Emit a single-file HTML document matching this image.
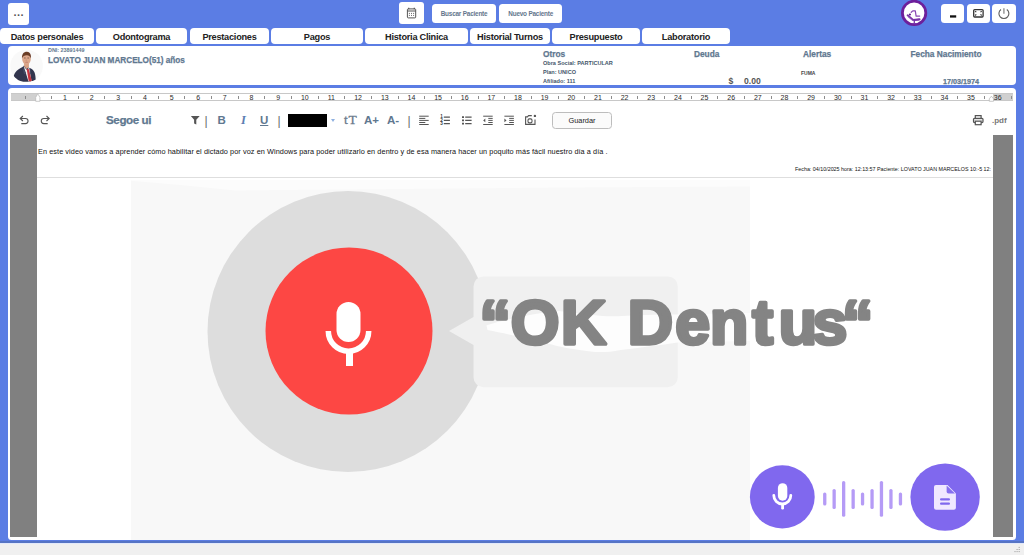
<!DOCTYPE html>
<html lang="es">
<head>
<meta charset="utf-8">
<title>Dentus - Historia Clinica</title>
<style>
*{box-sizing:border-box;margin:0;padding:0}
html,body{width:1024px;height:555px;overflow:hidden}
body{background:#5b7de4;font-family:"Liberation Sans",sans-serif;position:relative;color:#222}
.abs{position:absolute}
.btn{position:absolute;background:#fff;border-radius:3px}
.tab{position:absolute;top:28px;height:16.4px;background:#fff;border-radius:4px;font-weight:bold;font-size:9.2px;line-height:19.400px;overflow:hidden;text-align:center;color:#222;white-space:nowrap;letter-spacing:-0.25px}
.panel{position:absolute;background:#fff;border-radius:4px}
.t{position:absolute;white-space:nowrap;line-height:1}
.slate{color:#5f7890}
.hv{-webkit-text-stroke:0.250px currentColor}
.tk{position:absolute;top:2px;width:1px;height:3px;background:#8c8c8c}
.rn{position:absolute;top:0;width:20px;text-align:center;line-height:7px;white-space:nowrap}
</style>
</head>
<body>
<!-- top bar -->
<div class="btn" style="left:8px;top:3px;width:21px;height:22px"><span class="t" style="left:5.500px;top:4.200px;font-size:11px;font-weight:bold;color:#555;letter-spacing:0.500px">...</span></div>
<div class="btn" id="calbtn" style="left:399px;top:2px;width:25px;height:22px"></div>
<svg class="abs" style="left:399px;top:2px" width="25" height="22" viewBox="399 2 25 22" fill="none" stroke="#555" stroke-width="1">
<rect x="407.400" y="8.900" width="8.300" height="9" rx="0.800"/>
<path d="M407.400 11 H415.700" />
<path d="M408.700 7.700 V9.200 M414.300 7.700 V9.200" stroke-width="1.200"/>
<g fill="#666" stroke="none"><rect x="408.900" y="12.900" width="1" height="1"/><rect x="411" y="12.900" width="1" height="1"/><rect x="413.100" y="12.900" width="1" height="1"/><rect x="408.900" y="14.900" width="1" height="1"/><rect x="411" y="14.900" width="1" height="1"/><rect x="413.100" y="14.900" width="1" height="1"/></g>
</svg>
<div class="btn" style="left:432.400px;top:3.800px;width:63.300px;height:18.800px;border-radius:3.500px"><span class="t" style="left:0;width:63.300px;text-align:center;top:7.200px;font-size:6.400px;font-weight:bold;letter-spacing:-0.200px;color:#64768c">Buscar Paciente</span></div>
<div class="btn" style="left:499.100px;top:3.800px;width:63.200px;height:18.800px;border-radius:3.500px"><span class="t" style="left:0;width:63.200px;text-align:center;top:7.200px;font-size:6.400px;font-weight:bold;letter-spacing:-0.200px;color:#64768c">Nuevo Paciente</span></div>
<svg class="abs" id="logo" style="left:899px;top:0" width="30" height="28" viewBox="899 0 30 28">
<circle cx="914.100" cy="12.900" r="11.700" fill="#fff" stroke="#6c1f9b" stroke-width="2.800"/>
<g fill="none" stroke="#7a35a8" stroke-linecap="round" stroke-linejoin="round">
<path d="M907.600 15.300 L913.200 19.900 L919.600 19.300" stroke-width="1.900"/>
<path d="M913.200 19.300 L919.300 18.800 V20.400 L913.600 20.900 Z" fill="#7a35a8" stroke="none"/>
<path d="M908.300 16.900 L912.600 20.600" stroke-width="1" stroke="#9a62c0"/>
<path d="M914.300 20.300 V23.400 M912.300 23.600 H916.600" stroke-width="1.300"/>
<path d="M911.200 12.300 L912.800 10.900 H915.300 L916.100 16.100 H919.700" stroke-width="1.200" stroke="#8848b3"/>
</g>
<circle cx="909.900" cy="14.500" r="1.100" fill="#5a1a86"/>
</svg>
<div class="btn" style="left:940.700px;top:4px;width:23.700px;height:19px;border-radius:3.500px"></div>
<div class="btn" style="left:966.500px;top:4px;width:23.600px;height:19px;border-radius:3.500px"></div>
<div class="btn" style="left:992px;top:4px;width:24px;height:19px;border-radius:3.500px"></div>
<svg class="abs" style="left:940px;top:3px" width="77" height="21" viewBox="940 3 77 21" fill="none">
<rect x="950" y="15.300" width="6.200" height="2.300" fill="#111"/>
<rect x="973.700" y="9.600" width="9.400" height="7.400" rx="1" stroke="#333" stroke-width="1.300"/>
<path d="M975.100 11.100 l1.200 1.100 M981.700 11.100 l-1.200 1.100 M975.100 15.500 l1.200 -1.100 M981.700 15.500 l-1.200 -1.100" stroke="#333" stroke-width="1.100"/>
<path d="M1001 9.500 A5 5 0 1 0 1006.800 9.500" stroke="#5c5c5c" stroke-width="1.100"/>
<path d="M1003.900 8.200 V13.700" stroke="#999" stroke-width="1.500"/>
</svg>

<!-- tabs -->
<div class="tab" style="left:0;width:94px">Datos personales</div>
<div class="tab" style="left:96px;width:91px">Odontograma</div>
<div class="tab" style="left:190px;width:79px">Prestaciones</div>
<div class="tab" style="left:271px;width:92px">Pagos</div>
<div class="tab" style="left:365px;width:103px">Historia Clinica</div>
<div class="tab" style="left:470px;width:80px">Historial Turnos</div>
<div class="tab" style="left:552px;width:88px">Presupuesto</div>
<div class="tab" style="left:642px;width:88px">Laboratorio</div>

<!-- patient panel -->
<div class="panel" id="patient" style="left:8px;top:46px;width:1008px;height:39px">
</div>
<svg class="abs" id="avatar" style="left:9px;top:48px" width="36" height="36" viewBox="9 48 36 36">
<defs><clipPath id="avc"><circle cx="26.600" cy="66" r="16.300"/></clipPath><filter id="avb" x="-10%" y="-10%" width="120%" height="120%"><feGaussianBlur stdDeviation="0.350"/></filter></defs>
<circle cx="26.600" cy="66" r="16.300" fill="#f9f9f9"/>
<g clip-path="url(#avc)" filter="url(#avb)">
<path d="M13.300 80 C13.500 73 16 70.500 22.500 67 L24 65.500 L29.500 68 C33.500 69.500 35.500 71.500 35.700 80 C32 82.200 20 82.500 13.300 80 Z" fill="#30364e"/>
<path d="M23.500 65.800 L26.500 69.800 L29.200 67.800 L31.500 81 L28.500 81.500 Z" fill="#f2efef"/>
<path d="M26.700 69 L28.600 68.800 L31.800 80.500 L30.200 81.800 L28.600 80.500 Z" fill="#c8323d"/>
<path d="M24.200 62 L24 66 L26.500 69 L29 67 L28.800 62 Z" fill="#d9a285"/>
<ellipse cx="26.500" cy="59" rx="4.300" ry="5.700" fill="#dca78b"/>
<path d="M24 58 h1.700 M27.400 58 h1.700" stroke="#6b4a3c" stroke-width="0.700" fill="none"/>
<path d="M25.300 62.300 h2.600" stroke="#b56e62" stroke-width="0.600" fill="none"/>
<path d="M26.300 58.500 L26 61 h1" stroke="#c08a70" stroke-width="0.500" fill="none"/>
<path d="M22.700 67.200 L26 73 L24 74.500 Z M30 68.200 L29.500 73.500 L31.300 74 Z" fill="#444a63"/>
<path d="M22 58.500 C21.600 53.500 24.500 51.600 27 51.800 C30 52 31.500 54.500 30.800 58.500 C30 55.800 28.500 55 26.500 55.200 C24.500 55.200 22.800 56 22 58.500 Z" fill="#6a3d28"/>
</g>
</svg>
<span class="t slate" style="left:48px;top:47.900px;font-size:5.4px;font-weight:bold">DNI: 23891449</span>
<span class="t slate hv" style="left:48px;top:57.100px;font-size:8.2px;font-weight:bold">LOVATO JUAN MARCELO(51) años</span>
<span class="t slate hv" style="left:543px;top:49.800px;font-size:8.300px;font-weight:bold">Otros</span>
<span class="t" style="left:543px;top:61px;font-size:5.550px;font-weight:bold;color:#44556a">Obra Social: PARTICULAR</span>
<span class="t" style="left:543px;top:69.500px;font-size:5.550px;font-weight:bold;color:#44556a">Plan: UNICO</span>
<span class="t" style="left:543px;top:78.500px;font-size:5.550px;font-weight:bold;color:#44556a">Afiliado: 111</span>
<span class="t slate hv" style="left:694px;top:50.300px;font-size:8.300px;font-weight:bold">Deuda</span>
<span class="t" style="left:728.500px;top:77px;font-size:8.6px;font-weight:bold;color:#555">$</span>
<span class="t" style="left:744px;top:77px;font-size:8.6px;font-weight:bold;color:#555">0.00</span>
<span class="t slate hv" style="left:803px;top:49.800px;font-size:8.300px;font-weight:bold">Alertas</span>
<span class="t" style="left:801px;top:71px;font-size:5px;font-weight:bold;color:#444">FUMA</span>
<span class="t slate hv" style="left:910.500px;top:49.800px;font-size:8.300px;font-weight:bold">Fecha Nacimiento</span>
<span class="t slate hv" style="left:943px;top:77.500px;font-size:7.2px;font-weight:bold">17/03/1974</span>

<!-- editor panel -->
<div class="panel" id="editor" style="left:8px;top:88px;width:1008px;height:452.200px;border-radius:4px 4px 3.500px 3.500px"></div>

<div class="abs" id="ruler" style="left:11px;top:93px;width:1002px;height:8px;background:#fff;border-top:1px solid #c8c8c8;border-bottom:1px solid #c8c8c8;overflow:hidden;font-size:7px;color:#2a2a2a">
<div class="abs" style="left:0;top:0;width:25.5px;height:7px;background:#d0d0d0"></div>
<div class="abs" style="left:981.5px;top:0;width:20.5px;height:7px;background:#d0d0d0"></div>
<i class="tk" style="left:13.5px"></i>
<i class="tk" style="left:40.1px"></i>
<i class="tk" style="left:66.8px"></i>
<i class="tk" style="left:93.4px"></i>
<i class="tk" style="left:120.1px"></i>
<i class="tk" style="left:146.7px"></i>
<i class="tk" style="left:173.4px"></i>
<i class="tk" style="left:200.0px"></i>
<i class="tk" style="left:226.7px"></i>
<i class="tk" style="left:253.3px"></i>
<i class="tk" style="left:280.0px"></i>
<i class="tk" style="left:306.6px"></i>
<i class="tk" style="left:333.3px"></i>
<i class="tk" style="left:359.9px"></i>
<i class="tk" style="left:386.6px"></i>
<i class="tk" style="left:413.2px"></i>
<i class="tk" style="left:439.9px"></i>
<i class="tk" style="left:466.5px"></i>
<i class="tk" style="left:493.2px"></i>
<i class="tk" style="left:519.8px"></i>
<i class="tk" style="left:546.5px"></i>
<i class="tk" style="left:573.1px"></i>
<i class="tk" style="left:599.8px"></i>
<i class="tk" style="left:626.4px"></i>
<i class="tk" style="left:653.1px"></i>
<i class="tk" style="left:679.7px"></i>
<i class="tk" style="left:706.4px"></i>
<i class="tk" style="left:733.0px"></i>
<i class="tk" style="left:759.7px"></i>
<i class="tk" style="left:786.3px"></i>
<i class="tk" style="left:813.0px"></i>
<i class="tk" style="left:839.6px"></i>
<i class="tk" style="left:866.3px"></i>
<i class="tk" style="left:892.9px"></i>
<i class="tk" style="left:919.6px"></i>
<i class="tk" style="left:946.2px"></i>
<i class="tk" style="left:972.9px"></i>
<i class="tk" style="left:999.5px"></i>
<span class="rn" style="left:43.9px">1</span>
<span class="rn" style="left:70.6px">2</span>
<span class="rn" style="left:97.2px">3</span>
<span class="rn" style="left:123.9px">4</span>
<span class="rn" style="left:150.6px">5</span>
<span class="rn" style="left:177.2px">6</span>
<span class="rn" style="left:203.8px">7</span>
<span class="rn" style="left:230.5px">8</span>
<span class="rn" style="left:257.1px">9</span>
<span class="rn" style="left:283.8px">10</span>
<span class="rn" style="left:310.4px">11</span>
<span class="rn" style="left:337.1px">12</span>
<span class="rn" style="left:363.8px">13</span>
<span class="rn" style="left:390.4px">14</span>
<span class="rn" style="left:417.1px">15</span>
<span class="rn" style="left:443.7px">16</span>
<span class="rn" style="left:470.3px">17</span>
<span class="rn" style="left:497.0px">18</span>
<span class="rn" style="left:523.6px">19</span>
<span class="rn" style="left:550.3px">20</span>
<span class="rn" style="left:576.9px">21</span>
<span class="rn" style="left:603.6px">22</span>
<span class="rn" style="left:630.2px">23</span>
<span class="rn" style="left:656.9px">24</span>
<span class="rn" style="left:683.5px">25</span>
<span class="rn" style="left:710.2px">26</span>
<span class="rn" style="left:736.8px">27</span>
<span class="rn" style="left:763.5px">28</span>
<span class="rn" style="left:790.1px">29</span>
<span class="rn" style="left:816.8px">30</span>
<span class="rn" style="left:843.4px">31</span>
<span class="rn" style="left:870.1px">32</span>
<span class="rn" style="left:896.7px">33</span>
<span class="rn" style="left:923.4px">34</span>
<span class="rn" style="left:950.0px">35</span>
<span class="rn" style="left:976.7px">36</span>
</div>
<svg class="abs" style="left:30px;top:90px" width="970" height="14" viewBox="30 90 970 14" fill="#fff" stroke="#b4b4b4" stroke-width="0.700">
<path d="M35.700 101.300 V97.300 L37.800 93.800 L39.900 97.300 V101.300 Z"/>
<path d="M989.300 101.300 V98.800 L991.400 96.200 L993.500 98.800 V101.300 Z"/>
</svg>
<!-- toolbar -->
<div id="toolbar">
<span class="t slate hv" style="left:106px;top:113.700px;font-size:11.6px;font-weight:bold;letter-spacing:-0.4px">Segoe ui</span>
<span class="t" style="left:204.5px;top:115px;font-size:12px;color:#6a6a6a">|</span>
<span class="t slate" style="left:217.5px;top:115px;font-size:11.5px;font-weight:bold">B</span>
<span class="t" style="left:241px;top:114px;font-size:12.5px;font-style:italic;font-family:'Liberation Serif',serif;color:#5b7db1;font-weight:bold">I</span>
<span class="t slate" style="left:260px;top:115px;font-size:11.5px;font-weight:bold;text-decoration:underline">U</span>
<span class="t" style="left:277.5px;top:115px;font-size:12px;color:#6a6a6a">|</span>
<div class="abs" style="left:288px;top:114px;width:39px;height:13px;background:#000"></div>
<div class="abs" style="left:330.5px;top:119px;width:0;height:0;border-left:2.5px solid transparent;border-right:2.5px solid transparent;border-top:3px solid #8fb0e0"></div>
<span class="t slate" style="left:344px;top:112.5px;font-size:13.5px;font-family:'Liberation Serif',serif;letter-spacing:0.700px;color:#6b7b8c;-webkit-text-stroke:0.300px #6b7b8c">tT</span>
<span class="t slate" style="left:364px;top:115px;font-size:11.5px;font-weight:bold">A+</span>
<span class="t slate" style="left:387px;top:115px;font-size:11.5px;font-weight:bold">A-</span>
<span class="t" style="left:407.5px;top:115px;font-size:12px;color:#6a6a6a">|</span>
<div class="abs" style="left:552px;top:111.5px;width:60px;height:17.5px;border:1px solid #bdbdbd;border-radius:3.5px;background:#fbfbfb;font-size:7.4px;line-height:16.4px;text-align:center;color:#222">Guardar</div>
<span class="t" style="left:992px;top:116.8px;font-size:8px;font-weight:bold;color:#777">.pdf</span>
</div>
<svg class="abs" style="left:14px;top:110px" width="1000" height="22" viewBox="14 110 1000 22" fill="none" stroke="#555" stroke-width="1.100">
<path d="M22.900 116 L20.200 118.500 L22.900 121 M20.400 118.500 H25.500 A2.550 2.550 0 0 1 25.500 123.600 H21.300"/>
<path d="M46.500 116 L49.200 118.500 L46.500 121 M49 118.500 H43.800 A2.550 2.550 0 0 0 43.800 123.600 H47.700"/>
<path d="M190.900 116 H199.700 L196.300 119.800 V124.600 L194.100 123.600 V119.800 Z" fill="#555" stroke="none"/>
<path d="M419.200 116.200 H428.700 M419.200 118.400 H425.300 M419.200 120.400 H428.700 M419.200 122.500 H425.300 M419.200 124.500 H428.700" stroke-width="1"/>
<path d="M443.800 117.100 H449.900 M443.800 120.400 H449.900 M443.800 123.600 H449.900" stroke-width="1.200"/>
<path d="M462 117.100 H464 M462 120.400 H464 M462 123.600 H464" stroke-width="1.800"/>
<path d="M465.200 117.100 H471.600 M465.200 120.400 H471.600 M465.200 123.600 H471.600" stroke-width="1.200"/>
<path d="M483.200 116.200 H492.700 M488.300 118.400 H492.700 M488.300 120.400 H492.700 M488.300 122.500 H492.700 M483.200 124.500 H492.700" stroke-width="1"/>
<path d="M485.300 118.600 V122.200 L483.200 120.400 Z" fill="#555" stroke="none"/>
<path d="M504.400 116.200 H513.900 M509.200 118.400 H513.900 M509.200 120.400 H513.900 M509.200 122.500 H513.900 M504.400 124.500 H513.900" stroke-width="1"/>
<path d="M504.400 118.600 V122.200 L506.500 120.400 Z" fill="#555" stroke="none"/>
<path d="M531.800 115.600 H528.600 L527.400 116.900 H525.600 V124.400 H535 V119.600"/>
<rect x="528" y="118.900" width="4" height="4" rx="1.300"/>
<circle cx="534.900" cy="115.900" r="1.200" fill="#555" stroke="none"/>
<path d="M975.300 118.200 V115.700 H981.100 V118.200" stroke-width="1.200"/>
<rect x="973.500" y="118.300" width="9.500" height="4.300" rx="1" stroke-width="1.200" fill="#e4e4e4"/>
<rect x="975.300" y="121.200" width="5.800" height="3.500" stroke-width="1.200" fill="#fff"/>
</svg>
<svg class="abs" style="left:438px;top:112px" width="8" height="16" viewBox="438 112 8 16"><text font-family="'Liberation Sans',sans-serif" font-weight="bold" font-size="4.600" fill="#3c3c3c"><tspan x="440.200" y="118.300">1</tspan><tspan x="440.200" y="121.900">2</tspan><tspan x="440.200" y="125.400">3</tspan></text></svg>
<!-- sidebars -->
<div class="abs" style="left:10px;top:134.500px;width:26.700px;height:402.300px;background:#808080"></div>
<div class="abs" style="left:992.600px;top:134.500px;width:20.600px;height:402.300px;background:#808080"></div>
<!-- document text -->
<span class="t" style="left:38px;top:147.5px;font-size:7.3px;letter-spacing:0.075px;color:#111">En este video vamos a aprender cómo habilitar el dictado por voz en Windows para poder utilizarlo en dentro y de esa manera hacer un poquito más fácil nuestro día a día .</span>
<span class="t" style="left:795px;top:166.5px;font-size:5.350px;color:#111">Fecha: 04/10/2025 hora: 12:13:57 Paciente: LOVATO JUAN MARCELOS 10:-5 12:</span>
<div class="abs" style="left:37px;top:177px;width:955.5px;height:1px;background:#dedede"></div>
<!-- image -->
<div class="abs" id="img" style="left:130.500px;top:180px;width:619.500px;height:360.200px;background:#f8f8f8;overflow:hidden">
<svg class="abs" style="left:0;top:0" width="620" height="361" viewBox="130.5 180 620 361">
<path d="M130.500 180 H750 V186.500 L560 187.500 L400 189 L235 190.500 L180 185 L130.500 180.800 Z" fill="#fcfcfc"/>
<circle cx="347.5" cy="331.5" r="140.5" fill="#dddddd"/>
<path d="M483 276.400 H667.300 a10 10 0 0 1 10 10 V377.200 a10 10 0 0 1 -10 10 H483 a10 10 0 0 1 -10 -10 V345 L448.500 331 L473 317 V286.400 a10 10 0 0 1 10 -10 Z" fill="#f0f0f0"/>
<path d="M486 325.500 C500 320 540 312 558 311 C580 313 600 317.500 622 316 C645 314.500 665 314.500 677 314.400 L750 313 V341 L677 342.400 C660 345 640 347.500 620 350 C608 352.500 598 352.500 590 351.500 C575 349.500 562 347.500 553 345 C530 339 505 333.500 487 330 Z" fill="#fdfdfd"/>
<circle cx="348.5" cy="331" r="83.5" fill="#fd4744"/>
<rect x="336" y="302" width="24" height="40" rx="12" fill="#fff"/>
<path d="M327.800 331 a20.200 20.200 0 0 0 40.400 0" fill="none" stroke="#fff" stroke-width="5.500"/>
<rect x="345.500" y="352" width="7" height="14" fill="#fff"/>
</svg>
</div>

<svg class="abs" id="okd" style="left:470px;top:280px" width="420" height="90" viewBox="470 280 420 90">
<text y="343.700" x="479.400 510.800 561 606.300 627.700 675.300 710.100 752.300 778.800 812.600 842" font-family="'Liberation Sans',sans-serif" font-weight="bold" font-size="62.700" fill="#848484" stroke="#848484" stroke-width="3.600" stroke-linejoin="round">“OK Dentus“</text>
</svg>
<!-- floating buttons -->
<svg class="abs" style="left:745px;top:460px" width="240" height="75" viewBox="745 460 240 75">
<ellipse cx="782.3" cy="496.900" rx="32.400" ry="31.600" fill="#8068ee"/>
<rect x="777.900" y="483.200" width="9.400" height="17.500" rx="4.700" fill="#fff"/>
<path d="M773.800 495.500 a8.500 8.500 0 0 0 17 0" fill="none" stroke="#fff" stroke-width="2.800" stroke-linecap="round"/>
<rect x="781.200" y="503.500" width="2.800" height="6" rx="1.200" fill="#fff"/>
<g fill="#b59bf6">
<rect x="823.100" y="492.400" width="3.300" height="13.200" rx="1.600"/>
<rect x="832.500" y="489" width="3.300" height="20" rx="1.600"/>
<rect x="842" y="481" width="3.300" height="35.800" rx="1.600"/>
<rect x="851.500" y="489" width="3.300" height="20" rx="1.600"/>
<rect x="860.900" y="492.400" width="3.300" height="13.200" rx="1.600"/>
<rect x="870.400" y="489" width="3.300" height="20" rx="1.600"/>
<rect x="879.800" y="481" width="3.300" height="35.800" rx="1.600"/>
<rect x="889.300" y="489" width="3.300" height="20" rx="1.600"/>
<rect x="898.800" y="492.400" width="3.300" height="13.200" rx="1.600"/>
</g>
<ellipse cx="945.1" cy="497.100" rx="34.700" ry="33.700" fill="#8068ee"/>
<path d="M936 485 h11.500 l8.400 8.400 v14.400 a2 2 0 0 1 -2 2 h-17.900 a2 2 0 0 1 -2 -2 v-20.800 a2 2 0 0 1 2 -2 Z" fill="#f0e8ff"/>
<path d="M946.600 485.600 v5.800 a2 2 0 0 0 2 2 h6.400 Z" fill="#866fef"/>
<rect x="940" y="498.300" width="10" height="2.200" rx="1.100" fill="#8068ee"/>
<rect x="940" y="502.600" width="10" height="2.200" rx="1.100" fill="#8068ee"/>
</svg>

<!-- status bar -->
<div class="abs" style="left:0;top:541px;width:1024px;height:2.300px;background:#5674c4"></div>
<div class="abs" style="left:0;top:543.300px;width:1024px;height:12px;background:#f0f0f0;border-top:0.700px solid #e2e9fb"></div>
<svg class="abs" style="left:1012px;top:545px" width="10" height="9" viewBox="1012 545 10 9" fill="#a8a8a8">
<rect x="1018.600" y="546.900" width="1.200" height="1"/>
<rect x="1016.500" y="549" width="1.200" height="1"/><rect x="1018.600" y="549" width="1.200" height="1"/>
<rect x="1014.400" y="551.100" width="1.200" height="1"/><rect x="1016.500" y="551.100" width="1.200" height="1"/><rect x="1018.600" y="551.100" width="1.200" height="1"/>
</svg>
</body>
</html>
